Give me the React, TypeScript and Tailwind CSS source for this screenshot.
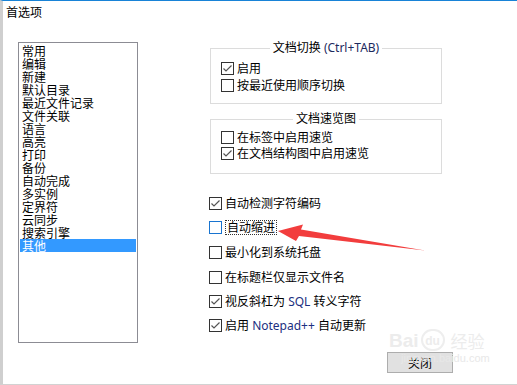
import React from "react";

const categories = [
  "常用",
  "编辑",
  "新建",
  "默认目录",
  "最近文件记录",
  "文件关联",
  "语言",
  "高亮",
  "打印",
  "备份",
  "自动完成",
  "多实例",
  "定界符",
  "云同步",
  "搜索引擎",
  "其他",
];

function CheckBox({ checked, focus }: { checked?: boolean; focus?: boolean }) {
  return (
    <span
      className={
        focus
          ? "flex h-[13px] w-[13px] shrink-0 items-center justify-center border border-[#1874d0] bg-white"
          : "flex h-[13px] w-[13px] shrink-0 items-center justify-center border border-[#333333] bg-white"
      }
    >
      {checked && (
        <svg width="11" height="11" viewBox="0 0 11 11">
          <polyline
            points="1.5,5.5 4,8 9.5,2.5"
            fill="none"
            stroke="#555555"
            strokeWidth="1.2"
          />
        </svg>
      )}
    </span>
  );
}

function Option({
  checked,
  focus,
  children,
  className,
}: {
  checked?: boolean;
  focus?: boolean;
  children: React.ReactNode;
  className?: string;
}) {
  return (
    <div className={"flex h-[13px] items-center gap-[3px] " + (className ?? "")}>
      <CheckBox checked={checked} focus={focus} />
      {focus ? (
        <span className="flex h-[15px] items-center border border-dotted border-[#333] px-px leading-[13px]">
          {children}
        </span>
      ) : (
        <span className="whitespace-nowrap leading-[13px]">{children}</span>
      )}
    </div>
  );
}

function Group({
  title,
  className,
  children,
}: {
  title: React.ReactNode;
  className: string;
  children: React.ReactNode;
}) {
  return (
    <div className={"relative w-[232px] border border-[#dcdcdc] " + className}>
      <div className="absolute -top-[9px] left-0 right-0 flex justify-center">
        <span className="bg-white px-[3px] leading-[16px]">{title}</span>
      </div>
      {children}
    </div>
  );
}

export default function App() {
  return (
    <div className="relative h-[385px] w-[517px] overflow-hidden border-t border-l-[3px] border-b border-t-[#1883d7] border-l-[#cfcfcf] border-b-[#d2d2d2] bg-white font-['Segoe_UI','Noto_Sans','Noto_Sans_CJK_SC',sans-serif] text-[12px] text-black">
      <div className="pl-[3px] pt-[4px] leading-[16px]">首选项</div>

      <div className="mt-[21px] flex items-start">
        {/* category list */}
        <div className="ml-[15px] h-[301px] w-[120px] border border-[#8c8c94] px-px pt-px font-['Noto_Sans_CJK_SC',sans-serif]">
          {categories.map((c, i) => (
            <div
              key={c}
              className={
                i === categories.length - 1
                  ? "h-[13px] bg-[#3399ff] pl-[2px] leading-[13px] text-white"
                  : "h-[13px] pl-[2px] leading-[13px]"
              }
            >
              {c}
            </div>
          ))}
        </div>

        {/* options */}
        <div className="ml-[72px] flex flex-col">
          <Group
            className="mt-[6px] h-[56px] pl-[10px] pt-[13px]"
            title={
              <>
                文档切换 <span className="text-[#1c2a5e]">(Ctrl+TAB)</span>
              </>
            }
          >
            <div className="flex flex-col gap-[4px]">
              <Option checked>启用</Option>
              <Option>按最近使用顺序切换</Option>
            </div>
          </Group>

          <Group className="mt-[15px] h-[55px] pl-[10px] pt-[11px]" title="文档速览图">
            <div className="flex flex-col gap-[3px]">
              <Option>在标签中启用速览</Option>
              <Option checked>在文档结构图中启用速览</Option>
            </div>
          </Group>

          <div className="-ml-px mt-[23px] flex flex-col">
            <Option checked>自动检测字符编码</Option>
            <Option focus className="mt-[11px]">
              自动缩进
            </Option>
            <Option className="mt-[12px]">最小化到系统托盘</Option>
            <Option className="mt-[12px]">在标题栏仅显示文件名</Option>
            <Option checked className="mt-[11px]">
              视反斜杠为 <span className="text-[#1c2f80]">SQL</span> 转义字符
            </Option>
            <Option checked className="mt-[11px]">
              启用 <span className="text-[#1c2f80]">Notepad++</span> 自动更新
            </Option>
          </div>

          <button
            type="button"
            className="ml-[177px] mt-[20px] flex h-[21px] w-[66px] items-center justify-center border border-[#adadad] bg-[#e1e1e1] font-['Noto_Sans_CJK_SC',sans-serif] leading-[13px]"
          >
            关闭
          </button>
        </div>
      </div>

      {/* red arrow annotation */}
      <svg
        className="pointer-events-none absolute left-[267px] top-[219px]"
        width="160"
        height="36"
        viewBox="267 219 160 36"
      >
        <polygon
          points="275,230 300,223.5 298,228.5 422,249.5 296,235 293,240"
          fill="#f23d3d"
        />
      </svg>

      {/* faint watermark */}
      <div className="pointer-events-none absolute left-[386px] top-[328px] flex flex-col items-start font-['Liberation_Sans',sans-serif] text-[#ececec]">
        <div className="flex items-end">
          <span className="text-[19px] font-bold leading-[20px]">Bai</span>
          <span className="ml-[2px] flex h-[22px] w-[24px] items-end justify-center rounded-full border-2 border-[#eeeeee] text-[12px] font-bold leading-[16px]">
            du
          </span>
          <span className="ml-[6px] font-['Noto_Sans_CJK_SC',sans-serif] text-[17px] leading-[20px]">
            经验
          </span>
        </div>
        <span className="ml-[12px] text-[11px] leading-[14px] text-[#e8e8e8]">jingyan.baidu.com</span>
      </div>
    </div>
  );
}
